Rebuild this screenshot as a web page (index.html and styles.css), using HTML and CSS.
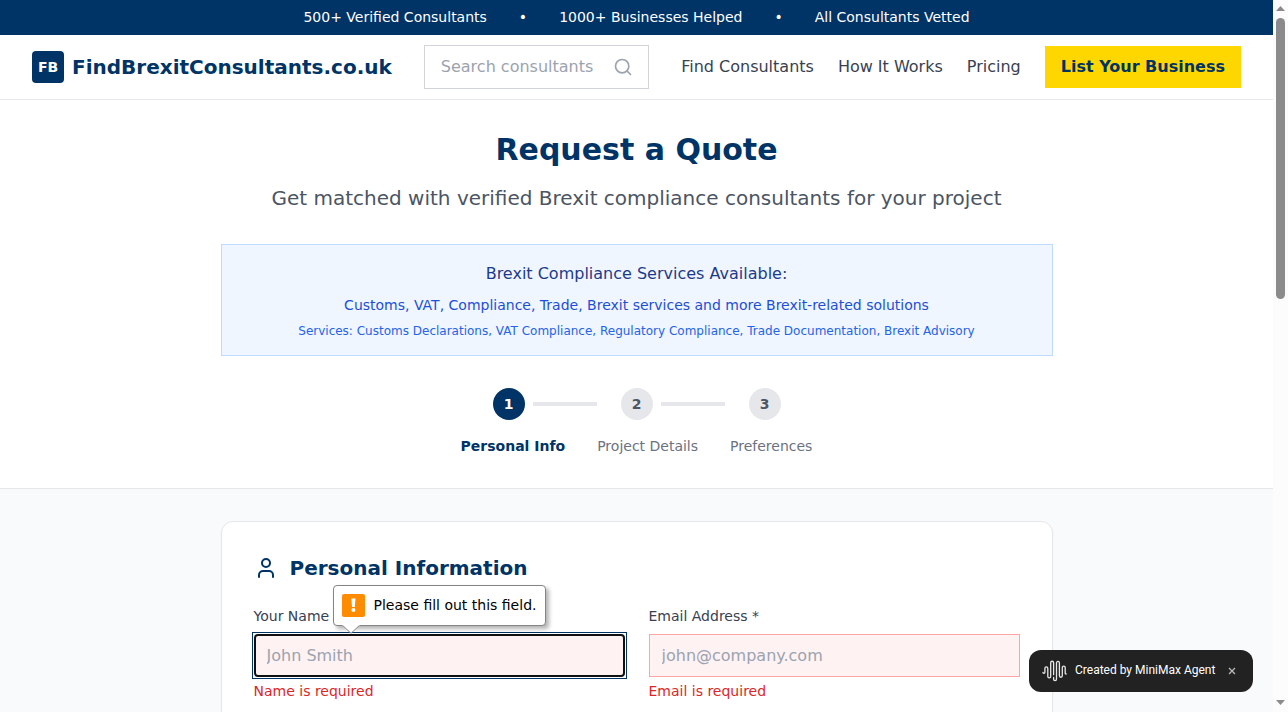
FILE: index.html
```html
<!DOCTYPE html>
<html lang="en">
<head>
<meta charset="utf-8">
<title>Request a Quote</title>
<link rel="stylesheet" href="styles.css">
</head>
<body>
<div class="window">
  <div class="page">
    <div class="topbar"><span>500+ Verified Consultants</span><span>•</span><span>1000+ Businesses Helped</span><span>•</span><span>All Consultants Vetted</span></div>
    <header class="header">
      <div class="brand"><span class="logo">FB</span><span class="brand-name">FindBrexitConsultants.co.uk</span></div>
      <div class="search">
        <input class="search-input" type="text" placeholder="Search consultants by name">
        <svg class="search-icon" viewBox="0 0 24 24"><circle cx="11" cy="11" r="8"/><path d="m21 21-4.3-4.3"/></svg>
      </div>
      <nav class="nav"><a>Find Consultants</a><a>How It Works</a><a>Pricing</a><a class="cta">List Your Business</a></nav>
    </header>
    <section class="hero">
      <h1 class="title">Request a Quote</h1>
      <p class="subtitle">Get matched with verified Brexit compliance consultants for your project</p>
      <div class="services">
        <p class="services-title">Brexit Compliance Services Available:</p>
        <p class="services-text">Customs, VAT, Compliance, Trade, Brexit services and more Brexit-related solutions</p>
        <p class="services-list">Services: Customs Declarations, VAT Compliance, Regulatory Compliance, Trade Documentation, Brexit Advisory</p>
      </div>
      <div class="steps"><span class="step active">1</span><span class="line"></span><span class="step next">2</span><span class="line"></span><span class="step next">3</span></div>
      <div class="step-labels"><span class="current">Personal Info</span><span>Project Details</span><span>Preferences</span></div>
    </section>
    <main class="main">
      <form class="card">
        <h2 class="card-title">
          <svg class="user-icon" viewBox="0 0 24 24"><path d="M19 21v-2a4 4 0 0 0-4-4H9a4 4 0 0 0-4 4v2"/><circle cx="12" cy="7" r="4"/></svg>
          Personal Information
        </h2>
        <div class="fields">
          <div class="field">
            <label class="label">Your Name *</label>
            <div class="control ring"><input class="input focused" type="text" placeholder="John Smith"></div>
            <p class="error">Name is required</p>
            <div class="bubble">
              <svg class="warn" viewBox="0 0 23 23"><rect width="23" height="23" rx="2" fill="#ff8c00"/><path d="M9.3 4.5h4.2l-.7 8.4h-2.8z" fill="#fff"/><circle cx="11.4" cy="16" r="2" fill="#fff"/></svg>
              <span class="bubble-text">Please fill out this field.</span>
              <svg class="tail" viewBox="0 0 18 9"><path d="M0 0 9 8.3 18 0" fill="#fff"/><path d="M.7 .5 9 8.3 17.3 .5" fill="none" stroke="#858585"/></svg>
            </div>
          </div>
          <div class="field">
            <label class="label">Email Address *</label>
            <div class="control"><input class="input" type="text" placeholder="john@company.com"></div>
            <p class="error">Email is required</p>
          </div>
        </div>
      </form>
    </main>
  </div>
  <div class="scrollbar">
    <svg class="arrow" viewBox="0 0 9 5"><path d="M0 5 4.5 0 9 5z"/></svg>
    <span class="thumb"></span>
    <svg class="arrow" viewBox="0 0 9 5"><path d="M0 0 4.5 5 9 0z"/></svg>
  </div>
</div>
<div class="badge">
  <svg class="wave" viewBox="0 0 26 22"><path d="M.9 12.300a1 1 0 0 0 2 0V8.300a1.450 1.450 0 0 1 2.900 0v8.200a1.450 1.450 0 0 0 2.900 0V2.700a1.450 1.450 0 0 1 2.900 0v12M11.600 17.500v1.700a1.450 1.450 0 0 0 2.900 0V2.900a1.450 1.450 0 0 1 2.900 0v12.900a1.450 1.450 0 0 0 2.900 0V7.500a1.450 1.450 0 0 1 2.900 0v5.700a.8 .8 0 0 0 1 .8"/></svg>
  <span class="badge-text">Created by MiniMax Agent</span>
  <svg class="close" viewBox="0 0 8 8"><path d="M1 1 7 7M7 1 1 7"/></svg>
</div>
</body>
</html>
```
FILE: styles.css
```css
* { box-sizing: border-box; margin: 0; padding: 0; }
body { font-family: "DejaVu Sans", sans-serif; font-size: 16px; line-height: 24px; color: #374151; overflow: hidden; }
.window { display: flex; height: 712px; overflow: hidden; }
.page { flex: 1; min-width: 0; background: #f9fafb; }
.topbar { height: 35px; padding-bottom: 2px; background: #003366; color: #fff; font-size: 14px; display: flex; justify-content: center; align-items: center; gap: 32px; }
.header { height: 65px; background: #fff; border-bottom: 1px solid #e5e7eb; padding: 0 32px; display: flex; align-items: center; gap: 32px; white-space: nowrap; }
.brand { display: flex; align-items: center; gap: 8px; }
.logo { width: 32px; height: 32px; border-radius: 4px; background: #003366; color: #fff; font-size: 14px; font-weight: 700; display: flex; align-items: center; justify-content: center; }
.brand-name { font-size: 20px; font-weight: 700; color: #003366; }
.search { flex: 1; min-width: 0; height: 44px; border: 1px solid #d1d5db; padding: 0 15px 0 16px; display: flex; align-items: center; gap: 14px; }
.search-input { flex: 1; min-width: 0; border: 0; outline: 0; font: inherit; background: none; }
input::placeholder { color: #9ca3af; opacity: 1; }
.search-icon { width: 20px; height: 20px; fill: none; stroke: #9ca3af; stroke-width: 2; stroke-linecap: round; }
.nav { display: flex; align-items: center; gap: 24px; }
.cta { background: #ffd700; color: #003366; font-weight: 700; padding: 9px 16px; }
.hero { height: 389px; background: #fff; border-bottom: 1px solid #e5e7eb; padding-top: 32px; text-align: center; }
.title { font-size: 30px; line-height: 36px; color: #003366; }
.subtitle { font-size: 20px; line-height: 28px; color: #4b5563; margin-top: 16px; }
.services { width: 832px; height: 112px; margin: 32px auto 0; border: 1px solid #bfdbfe; background: #eff6ff; padding-top: 17px; }
.services-title { color: #1e3a8a; }
.services-text { font-size: 14px; line-height: 20px; color: #1d4ed8; margin-top: 9px; }
.services-list { font-size: 12px; line-height: 16px; color: #2563eb; margin-top: 8px; }
.steps { display: flex; justify-content: center; align-items: center; margin-top: 32px; }
.step { width: 32px; height: 32px; border-radius: 50%; background: #e5e7eb; color: #4b5563; font-size: 14px; font-weight: 700; display: flex; align-items: center; justify-content: center; }
.step.active { background: #003366; color: #fff; }
.step.next { margin-left: 24px; }
.line { width: 64px; height: 4px; margin-left: 8px; background: #e5e7eb; }
.step-labels { display: flex; justify-content: center; gap: 32px; margin-top: 16px; font-size: 14px; line-height: 20px; color: #6b7280; }
.current { color: #003366; font-weight: 700; }
.main { padding-top: 32px; }
.card { width: 832px; height: 500px; margin: 0 auto; padding: 32px; background: #fff; border: 1px solid #e5e7eb; border-radius: 12px; box-shadow: 0 1px 2px rgba(0,0,0,.05); }
.card-title { display: flex; align-items: center; gap: 12px; font-size: 20px; line-height: 28px; color: #003366; }
.user-icon { width: 24px; height: 24px; fill: none; stroke: #003366; stroke-width: 2; stroke-linecap: round; stroke-linejoin: round; }
.fields { display: grid; grid-template-columns: 1fr 1fr; gap: 24px; margin-top: 24px; }
.field { position: relative; }
.label { display: block; font-size: 14px; line-height: 20px; }
.control { margin-top: 8px; }
.ring { box-shadow: 0 0 0 1px #fff, 0 0 0 2px #003366; }
.input { display: block; width: 100%; height: 43px; padding: 0 12px; border: 1px solid #fca5a5; background: #fef2f2; font: inherit; }
.focused { border: 2px solid #101010; border-radius: 4px; padding: 0 11px; outline: 0; }
.error { font-size: 14px; line-height: 20px; color: #dc2626; margin-top: 4px; }
.bubble { position: absolute; left: 79px; top: -21px; width: 213px; height: 41px; background: #fff; border: 1px solid #858585; border-radius: 4px; box-shadow: 3px 3px 4px rgba(0,0,0,.3); display: flex; align-items: center; gap: 9px; padding-left: 8px; font-size: 14px; color: #000; white-space: nowrap; }
.bubble-text { padding-bottom: 2px; }
.warn { width: 23px; height: 23px; }
.tail { position: absolute; left: 8px; top: 39px; width: 18px; height: 9px; }
.scrollbar { width: 15px; background: #fcfcfc; display: flex; flex-direction: column; align-items: center; padding: 6px 0 7px; }
.arrow { width: 9px; height: 5px; fill: #8b8b8b; }
.arrow:last-child { margin-top: auto; }
.thumb { width: 9px; height: 281px; margin-top: 7px; border-radius: 5px; background: #8b8b8b; }
.badge { position: fixed; left: 1029px; top: 650px; width: 224px; height: 42px; border-radius: 12px; background: #222; color: #fff; display: flex; align-items: center; padding: 0 17px 0 13px; font: 400 12px Roboto, sans-serif; white-space: nowrap; }
.badge-text { padding-bottom: 2px; }
.wave { width: 26px; height: 22px; margin-right: 7px; fill: none; stroke: #e8e8e8; stroke-width: 1.3; stroke-linecap: round; }
.close { width: 8px; height: 8px; margin-left: auto; fill: none; stroke: #bbb; stroke-width: 1.3; }
```
